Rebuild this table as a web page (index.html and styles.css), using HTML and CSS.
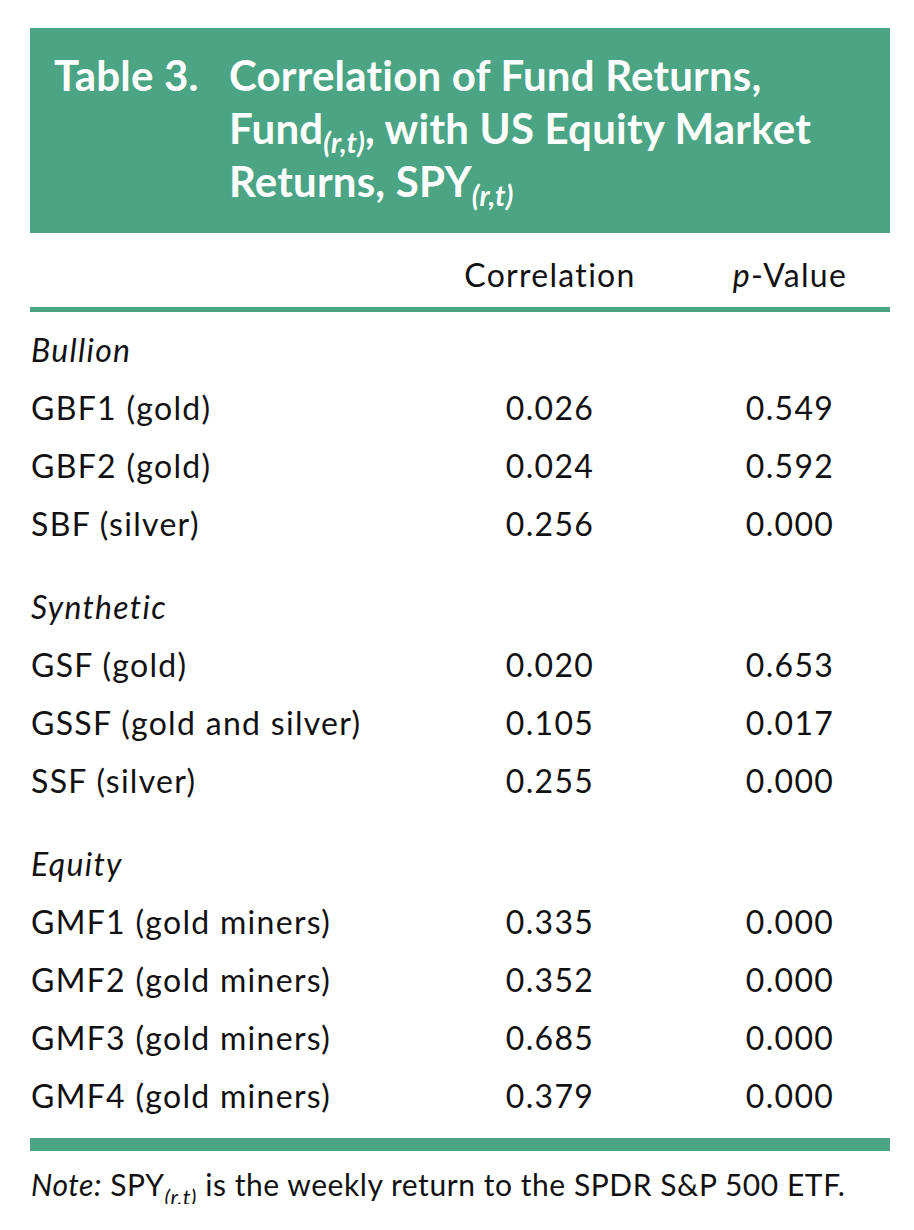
FILE: index.html
```html
<!DOCTYPE html>
<html lang="en">
<head>
<meta charset="utf-8">
<title>Table 3</title>
<link rel="stylesheet" href="styles.css">
</head>
<body>
<div class="exhibit">
  <div class="title-band">
    <div class="title-num">Table 3.</div>
    <div class="title-text">Correlation of Fund Returns,<br>Fund<sub class="idx">(r,t)</sub>, with US Equity Market<br>Returns, SPY<sub class="idx">(r,t)</sub></div>
  </div>
  <div class="table">
    <div class="row head">
      <div class="cell label"></div>
      <div class="cell num">Correlation</div>
      <div class="cell num"><i>p</i>-Value</div>
    </div>
    <div class="body">
      <div class="group">
        <div class="row"><div class="cell label group-name">Bullion</div></div>
        <div class="row"><div class="cell label">GBF1 (gold)</div><div class="cell num">0.026</div><div class="cell num">0.549</div></div>
        <div class="row"><div class="cell label">GBF2 (gold)</div><div class="cell num">0.024</div><div class="cell num">0.592</div></div>
        <div class="row"><div class="cell label">SBF (silver)</div><div class="cell num">0.256</div><div class="cell num">0.000</div></div>
      </div>
      <div class="group">
        <div class="row"><div class="cell label group-name">Synthetic</div></div>
        <div class="row"><div class="cell label">GSF (gold)</div><div class="cell num">0.020</div><div class="cell num">0.653</div></div>
        <div class="row"><div class="cell label">GSSF (gold and silver)</div><div class="cell num">0.105</div><div class="cell num">0.017</div></div>
        <div class="row"><div class="cell label">SSF (silver)</div><div class="cell num">0.255</div><div class="cell num">0.000</div></div>
      </div>
      <div class="group">
        <div class="row"><div class="cell label group-name">Equity</div></div>
        <div class="row"><div class="cell label">GMF1 (gold miners)</div><div class="cell num">0.335</div><div class="cell num">0.000</div></div>
        <div class="row"><div class="cell label">GMF2 (gold miners)</div><div class="cell num">0.352</div><div class="cell num">0.000</div></div>
        <div class="row"><div class="cell label">GMF3 (gold miners)</div><div class="cell num">0.685</div><div class="cell num">0.000</div></div>
        <div class="row"><div class="cell label">GMF4 (gold miners)</div><div class="cell num">0.379</div><div class="cell num">0.000</div></div>
      </div>
    </div>
  </div>
  <p class="note"><i>Note:</i> SPY<sub class="idx">(r,t)</sub> is the weekly return to the SPDR S&amp;P 500 ETF.</p>
</div>
</body>
</html>
```

FILE: styles.css
```css
html, body {
  margin: 0;
  padding: 0;
  background: #ffffff;
}

body {
  font-family: Lato, "Open Sans", "Liberation Sans", sans-serif;
  color: #111111;
}

.exhibit {
  margin: 28px 24px 0 30px;
  width: 860px;
}

.title-band {
  background: #4ba484;
  color: #ffffff;
  display: flex;
  padding: 21px 20px 0 24px;
  height: 184px;
  font-weight: 700;
  font-size: 42px;
  line-height: 53px;
  letter-spacing: 0.2px;
}

.title-num {
  width: 175px;
  flex: none;
}

.title-text {
  flex: 1;
}

.idx {
  font-style: italic;
  font-weight: 400;
  font-size: 0.7em;
  vertical-align: baseline;
  position: relative;
  top: 0.35em;
  line-height: 0;
}

.title-text .idx {
  font-weight: 700;
  font-size: 0.68em;
  top: 0.32em;
}

.table {
  font-size: 32px;
  letter-spacing: 1.3px;
}

.row {
  display: grid;
  grid-template-columns: 1fr 200px 200px;
  column-gap: 40px;
  height: 58px;
  align-items: center;
}

.row.head {
  height: 58px;
  border-bottom: 5px solid #4ba484;
  align-items: end;
  padding-bottom: 16px;
  box-sizing: content-box;
}

.head .num {
  line-height: 1;
}

.body {
  padding-top: 8px;
  padding-bottom: 14px;
  border-bottom: 13px solid #4ba484;
  display: flex;
  flex-direction: column;
  gap: 25px;
}

.cell.label {
  padding-left: 1px;
}

.cell.num {
  text-align: center;
}

.group-name {
  font-style: italic;
}

.note {
  margin: 13px 0 0 1px;
  font-size: 30px;
  line-height: 40px;
  letter-spacing: 0.55px;
}

.note .idx {
  font-size: 0.72em;
  top: 0.4em;
}
```
